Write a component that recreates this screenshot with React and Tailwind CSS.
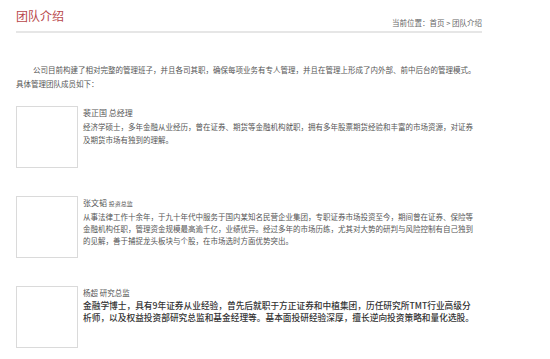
import React from 'react';

const members = [
  {
    name: '裴正国',
    title: '总经理',
    titleClass: 'text-[8px]',
    nameClass: 'text-[8px] text-[#555]',
    descClass: 'text-[7.5px] leading-[12.5px] text-[#555] mt-[1px]',
    lines: [
      '经济学硕士，多年金融从业经历，曾在证券、期货等金融机构就职，拥有多年股票期货经验和丰富的市场资源，对证券',
      '及期货市场有独到的理解。',
    ],
  },
  {
    name: '张文韬',
    title: '投资总监',
    titleClass: 'text-[6px]',
    nameClass: 'text-[8px] text-[#555]',
    descClass: 'text-[7.5px] leading-[12px] text-[#555]',
    lines: [
      '从事法律工作十余年，于九十年代中服务于国内某知名民营企业集团，专职证券市场投资至今，期间曾在证券、保险等',
      '金融机构任职，管理资金规模最高逾千亿，业绩优异。经过多年的市场历练，尤其对大势的研判与风险控制有自己独到',
      '的见解，善于捕捉龙头板块与个股，在市场选时方面优势突出。',
    ],
  },
  {
    name: '杨超',
    title: '研究总监',
    titleClass: 'text-[7.5px]',
    nameClass: 'text-[7.5px] text-[#555]',
    descClass: 'text-[8.7px] leading-[11.5px] text-[#333] font-medium',
    lines: [
      '金融学博士，具有9年证券从业经验，曾先后就职于方正证券和中植集团，历任研究所TMT行业高级分',
      '析师，以及权益投资部研究总监和基金经理等。基本面投研经验深厚，擅长逆向投资策略和量化选股。',
    ],
  },
];

export default function App() {
  return (
    <div className="w-[550px] h-[359px] bg-white overflow-hidden font-['Noto_Sans_CJK_SC','Noto_Sans',sans-serif]">
      <div className="ml-4 w-[466px]">
        {/* Header */}
        <div className="flex justify-between h-[33px] border-b-2 border-[#e6e6e6]">
          <h1 className="pt-[8px] text-[12px] leading-[16px] text-[#b8474a]">团队介绍</h1>
          <p className="pt-[18px] text-[7.5px] leading-[10px] text-[#666]">当前位置：首页 &gt; 团队介绍</p>
        </div>

        {/* Intro */}
        <p className="mt-[30px] text-[7.5px] leading-[13.5px] text-[#555] whitespace-nowrap">
          <span className="pl-[17px]">公司目前构建了相对完整的管理班子，并且各司其职，确保每项业务有专人管理，并且在管理上形成了内外部、前中后台的管理模式。</span>
          <br />
          具体管理团队成员如下：
        </p>

        {/* Members */}
        <div className="mt-[16px] flex flex-col gap-[28px]">
          {members.map((m) => (
            <div key={m.name} className="flex gap-[5px]">
              <div className="w-[62px] h-[62px] shrink-0 border border-[#dadada] bg-white"></div>
              <div>
                <p className={`leading-[14px] ${m.nameClass}`}>
                  {m.name} <span className={m.titleClass}>{m.title}</span>
                </p>
                <p className={`whitespace-nowrap ${m.descClass}`}>
                  {m.lines.map((l, i) => (
                    <React.Fragment key={i}>
                      {i > 0 && <br />}
                      {l}
                    </React.Fragment>
                  ))}
                </p>
              </div>
            </div>
          ))}
        </div>
      </div>
    </div>
  );
}
